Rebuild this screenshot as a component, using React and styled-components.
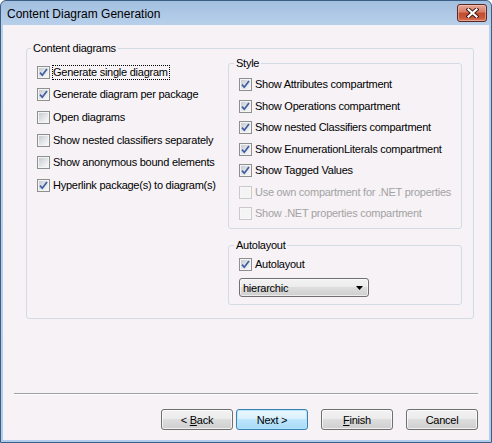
import styled, { createGlobalStyle } from 'styled-components';

const GlobalStyle = createGlobalStyle`
  html, body { margin: 0; padding: 0; background: #fff; }
  * { box-sizing: border-box; }
`;

const Window = styled.div`
  width: 492px;
  height: 443px;
  display: flex;
  flex-direction: column;
  border: 1px solid #3b5e85;
  border-radius: 6px 6px 0 0;
  background: linear-gradient(to bottom, #a3bfdf 0px, #b9d1ec 26px, #b2cdeb 100%);
  padding: 0 2px 2px;
  font-family: "Liberation Sans", Arial, sans-serif;
  overflow: hidden;
`;

const TitleBar = styled.div`
  height: 24px;
  flex: none;
  display: flex;
  align-items: flex-start;
  padding: 0 2px 0 4px;
`;

const Title = styled.div`
  margin-top: 6px;
  font-size: 12px;
  line-height: 14px;
  color: #000;
`;

const CloseButton = styled.div`
  margin: 3px 0 0 auto;
  width: 30px;
  height: 18px;
  border: 1px solid #5a2820;
  border-radius: 3px;
  background: linear-gradient(to bottom, #e8a898 0%, #d77a64 45%, #c24a2f 50%, #c9583b 80%, #d7795c 100%);
  box-shadow: inset 0 0 0 1px rgba(255, 220, 210, 0.45);
  display: flex;
  align-items: center;
  justify-content: center;
`;

const Client = styled.div`
  flex: 1;
  display: flex;
  flex-direction: column;
  background: #f6f2f6;
  font-size: 11px;
  letter-spacing: -0.25px;
  color: #000;
`;

const Group = styled.fieldset`
  margin: ${p => p.$margin || '0'};
  padding: 0;
  min-width: 0;
  border: 1px solid #d3dbe3;
  border-radius: 3px;
`;

const Legend = styled.legend`
  margin-left: ${p => p.$indent}px;
  padding: 0 2px;
  font-size: 11px;
  line-height: 13px;
`;

const GroupBody = styled.div`
  padding: ${p => p.$pad};
`;

const Columns = styled.div`
  display: flex;
  align-items: flex-start;
  padding: 2px 11px 13px 10px;
`;

const LeftColumn = styled.div`
  flex: 1;
  padding-top: 4px;
  display: flex;
  flex-direction: column;
`;

const RightColumn = styled.div`
  width: 234px;
  flex: none;
  display: flex;
  flex-direction: column;
`;

const Row = styled.div`
  display: flex;
  align-items: center;
  height: ${p => p.$h}px;
  color: ${p => (p.$disabled ? '#a3a3a3' : '#000')};
`;

const Box = styled.span`
  width: 13px;
  height: 13px;
  flex: none;
  display: flex;
  padding: 1px;
  border: 1px solid ${p => (p.$disabled ? '#cacaca' : '#8e8f8f')};
  background: ${p => (p.$disabled ? '#f7f7f7' : '#f4f4f4')};
`;

const BoxInner = styled.span`
  flex: 1;
  display: flex;
  background: ${p => (p.$disabled ? '#f4f4f4' : 'linear-gradient(135deg, #c6cad0 0%, #e4e6e9 55%, #f8f8f8 100%)')};
`;

const Caption = styled.span`
  margin-left: 2px;
  padding-right: 1px;
  line-height: 13px;
  white-space: nowrap;
  border: 1px dotted ${p => (p.$focus ? '#000' : 'transparent')};
`;

const Combo = styled.div`
  width: 130px;
  height: 19px;
  margin-top: 3px;
  display: flex;
  align-items: center;
  justify-content: space-between;
  padding: 0 5px 0 3px;
  border: 1px solid #707070;
  border-radius: 3px;
  background: linear-gradient(to bottom, #f3f3f3 0%, #ebebeb 50%, #dddddd 50%, #cfcfcf 100%);
  box-shadow: inset 0 0 0 1px rgba(255, 255, 255, 0.6);
`;

const Spacer = styled.div`
  flex: 1;
`;

const Separator = styled.div`
  margin: 0 11px;
  height: 2px;
  border-top: 1px solid #a0a0a0;
  border-bottom: 1px solid #ffffff;
`;

const ButtonRow = styled.div`
  display: flex;
  justify-content: flex-end;
  padding: 14px 11px 10px 0;
`;

const Button = styled.div`
  width: 72px;
  height: 21px;
  margin-left: ${p => p.$gap}px;
  display: flex;
  align-items: center;
  justify-content: center;
  border: 1px solid ${p => (p.$default ? '#3c7fb1' : '#707070')};
  border-radius: 3px;
  background: ${p =>
    p.$default
      ? 'linear-gradient(to bottom, #eaf6fd 0%, #d9f0fc 50%, #bee6fd 50%, #a7d9f5 100%)'
      : 'linear-gradient(to bottom, #f2f2f2 0%, #ebebeb 50%, #dddddd 50%, #cfcfcf 100%)'};
  box-shadow: inset 0 0 0 1px ${p => (p.$default ? 'rgba(180, 230, 255, 0.9)' : 'rgba(255, 255, 255, 0.7)')};
  font-size: 11px;

  u { text-decoration: underline; }
`;

const CheckRow = ({ label, checked, disabled, focus, h }) => (
  <Row $h={h} $disabled={disabled}>
    <Box $disabled={disabled}>
      <BoxInner $disabled={disabled}>
        {checked && (
          <svg width="9" height="9" viewBox="0 0 9 9" style={{ overflow: 'visible' }}>
            <path d="M1 4.6 L3.3 7.2 L8 1.1" fill="none" stroke="#3d5ea3" strokeWidth="1.7" />
          </svg>
        )}
      </BoxInner>
    </Box>
    <Caption $focus={focus}>{label}</Caption>
  </Row>
);

const leftItems = [
  { label: 'Generate single diagram', checked: true, focus: true },
  { label: 'Generate diagram per package', checked: true },
  { label: 'Open diagrams', checked: false },
  { label: 'Show nested classifiers separately', checked: false },
  { label: 'Show anonymous bound elements', checked: false },
  { label: 'Hyperlink package(s) to diagram(s)', checked: true },
];

const styleItems = [
  { label: 'Show Attributes compartment', checked: true },
  { label: 'Show Operations compartment', checked: true },
  { label: 'Show nested Classifiers compartment', checked: true },
  { label: 'Show EnumerationLiterals compartment', checked: true },
  { label: 'Show Tagged Values', checked: true },
  { label: 'Use own compartment for .NET properties', checked: false, disabled: true },
  { label: 'Show .NET properties compartment', checked: false, disabled: true },
];

export default function App() {
  return (
    <>
      <GlobalStyle />
      <Window>
        <TitleBar>
          <Title>Content Diagram Generation</Title>
          <CloseButton>
            <svg width="13" height="10" viewBox="0 0 13 10">
              <path d="M2.5 1.5 L10.5 8.5 M10.5 1.5 L2.5 8.5" stroke="#3a1510" strokeWidth="4" strokeLinecap="square" />
              <path d="M2.5 1.5 L10.5 8.5 M10.5 1.5 L2.5 8.5" stroke="#ffffff" strokeWidth="2.2" strokeLinecap="square" />
            </svg>
          </CloseButton>
        </TitleBar>
        <Client>
          <Group $margin="17px 15px 0 23px">
            <Legend $indent={4}>Content diagrams</Legend>
            <Columns>
              <LeftColumn>
                {leftItems.map(item => (
                  <CheckRow key={item.label} h={22.6} {...item} />
                ))}
              </LeftColumn>
              <RightColumn>
                <Group>
                  <Legend $indent={5}>Style</Legend>
                  <GroupBody $pad="4px 0 3px 10px">
                    {styleItems.map(item => (
                      <CheckRow key={item.label} h={21.5} {...item} />
                    ))}
                  </GroupBody>
                </Group>
                <Group $margin="10px 0 0 0">
                  <Legend $indent={5}>Autolayout</Legend>
                  <GroupBody $pad="2px 0 7px 10px">
                    <CheckRow label="Autolayout" checked h={21.5} />
                    <Combo>
                      <span>hierarchic</span>
                      <svg width="7" height="4" viewBox="0 0 7 4">
                        <path d="M0 0 H7 L3.5 4 Z" fill="#000" />
                      </svg>
                    </Combo>
                  </GroupBody>
                </Group>
              </RightColumn>
            </Columns>
          </Group>
          <Spacer />
          <Separator />
          <ButtonRow>
            <Button $gap={0}>&lt;&nbsp;<u>B</u>ack</Button>
            <Button $gap={3} $default>Next &gt;</Button>
            <Button $gap={13}><u>F</u>inish</Button>
            <Button $gap={13}>Cancel</Button>
          </ButtonRow>
        </Client>
      </Window>
    </>
  );
}
